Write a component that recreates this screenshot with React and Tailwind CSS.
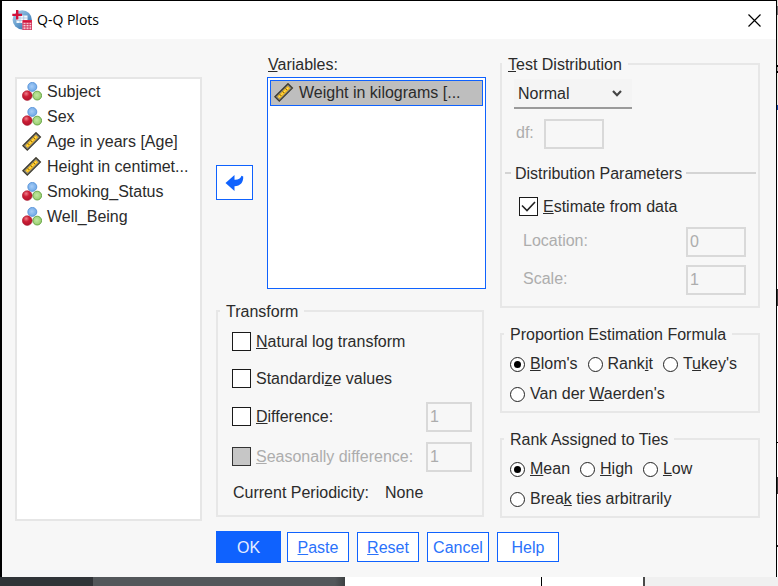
import { useState } from "react";

function NominalIcon() {
  return (
    <svg width="20" height="20" viewBox="0 0 20 20" className="shrink-0" aria-hidden="true">
      <defs>
        <radialGradient id="ballBlue" cx="0.45" cy="0.45" r="0.6">
          <stop offset="0" stopColor="#a6ccf6" />
          <stop offset="1" stopColor="#6aa5e6" />
        </radialGradient>
        <radialGradient id="ballRed" cx="0.4" cy="0.3" r="0.7">
          <stop offset="0" stopColor="#ee7f8b" />
          <stop offset="0.45" stopColor="#cc1f36" />
          <stop offset="1" stopColor="#b0142c" />
        </radialGradient>
        <radialGradient id="ballGreen" cx="0.45" cy="0.45" r="0.6">
          <stop offset="0" stopColor="#c2e8a2" />
          <stop offset="1" stopColor="#92ca68" />
        </radialGradient>
      </defs>
      <circle cx="10.3" cy="4.9" r="4.5" fill="url(#ballBlue)" stroke="#4f8dd6" strokeWidth="0.8" />
      <circle cx="15.2" cy="13.6" r="4.4" fill="url(#ballGreen)" stroke="#62a040" strokeWidth="0.9" />
      <circle cx="5.2" cy="13.6" r="4.9" fill="url(#ballRed)" stroke="#a3122a" strokeWidth="0.5" />
    </svg>
  );
}

function ScaleIcon() {
  return (
    <svg width="20" height="20" viewBox="0 0 20 20" className="shrink-0" aria-hidden="true">
      <path d="M0.9 13.8 14 0.7 18.4 5.1 5.3 18.2Z" fill="#8a877b" stroke="#3f3c30" strokeWidth="1.3" />
      <path d="M3.4 13.4 13.8 3 16.1 5.3 5.7 15.7Z" fill="#fcc21a" />
      <path d="M5.6 11.2 7.3 12.9M8.5 8.3 10.3 10.1M11.4 5.4 13.2 7.2" stroke="#6d5510" strokeWidth="0.9" />
      <path d="M4.4 14.6 14.9 4.1" stroke="#fff0a8" strokeWidth="0.6" strokeDasharray="2 2" />
    </svg>
  );
}

function AppIcon() {
  return (
    <svg width="20" height="20" viewBox="0 0 20 20" className="shrink-0" aria-hidden="true">
      <defs>
        <linearGradient id="globe" x1="0" y1="0" x2="0.8" y2="1">
          <stop offset="0" stopColor="#b4d2ea" />
          <stop offset="0.5" stopColor="#6fa5d2" />
          <stop offset="1" stopColor="#2d6cab" />
        </linearGradient>
      </defs>
      <circle cx="10.2" cy="9.8" r="9.6" fill="url(#globe)" />
      <rect x="4.5" y="5.5" width="11" height="7.5" fill="#f4f8fc" />
      <path d="M4.5 8H15.5M4.5 10.5H15.5M8 5.5V13M11.7 5.5V13" stroke="#9cbcdc" strokeWidth="0.7" />
      <path d="M5.2 0V9.6M0.3 4.9H10" stroke="#d3123a" strokeWidth="2.4" />
      <rect x="10.5" y="10" width="9.5" height="9.8" fill="#f6d3da" />
      <path d="M10.5 11.4H20" stroke="#d3123a" strokeWidth="2.6" />
      <path d="M10.5 14.4H20M10.5 16.9H20M10.5 19.4H20M11 12V19.8M14 12V19.8M17 12V19.8M19.6 11V19.8" stroke="#d3325a" strokeWidth="0.9" />
    </svg>
  );
}

function Group({ title, className, children }) {
  return (
    <fieldset className={`border-2 border-[#e7e7e7] ${className}`}>
      <legend className="px-1.5 pt-0.5 leading-[18px]">{title}</legend>
      {children}
    </fieldset>
  );
}

function Check({ children, disabled, defaultChecked }) {
  return (
    <label className={`flex items-center gap-[5px] ${disabled ? "text-[#adadad]" : ""}`}>
      <span className="grid size-[19px] shrink-0">
        <input
          type="checkbox"
          disabled={disabled}
          defaultChecked={defaultChecked}
          className="peer col-start-1 row-start-1 size-[19px] appearance-none border border-[#1a1a1a] bg-white disabled:border-[#333] disabled:bg-[#c6c6c6]"
        />
        <svg viewBox="0 0 19 19" className="pointer-events-none invisible col-start-1 row-start-1 peer-checked:visible" aria-hidden="true">
          <path d="M3 8.5 8 13.5 16 5" fill="none" stroke="#222" strokeWidth="1.6" />
        </svg>
      </span>
      <span>{children}</span>
    </label>
  );
}

function Radio({ name, defaultChecked, children }) {
  return (
    <label className="flex items-center gap-[5px]">
      <input
        type="radio"
        name={name}
        defaultChecked={defaultChecked}
        className="grid size-[15px] shrink-0 appearance-none place-items-center rounded-full border border-[#222] bg-white before:size-[7px] before:rounded-full checked:before:bg-black"
      />
      <span>{children}</span>
    </label>
  );
}

function NumberBox({ className, ...props }) {
  return (
    <input
      type="text"
      disabled
      className={`h-[30px] border-2 border-[#d9d9d9] bg-[#f7f7f7] px-0.5 text-[#adadad] ${className}`}
      {...props}
    />
  );
}

function ActionButton({ children }) {
  return (
    <button type="button" className="h-[30px] w-[62px] border border-[#0f62fe] bg-white pt-0.5 text-center text-[#2a72fb]">
      {children}
    </button>
  );
}

const variables = [
  { name: "Subject", kind: "nominal" },
  { name: "Sex", kind: "nominal" },
  { name: "Age in years [Age]", kind: "scale" },
  { name: "Height in centimet...", kind: "scale" },
  { name: "Smoking_Status", kind: "nominal" },
  { name: "Well_Being", kind: "nominal" },
];

export default function App() {
  const [distribution, setDistribution] = useState("Normal");
  return (
    <div className="flex min-h-screen flex-col bg-white font-['Liberation_Sans',Arial,sans-serif] text-base leading-[18px] text-[#2b2b2b]">
      <div className="flex flex-1">
        <main className="flex flex-1 flex-col border-t border-r border-l-2 border-black bg-[#f7f7f7]">
          <header className="flex h-[38px] items-center gap-[5px] bg-white pr-[15px] pl-2.5">
            <AppIcon />
            <h1 className="flex-1 font-['Open_Sans','Noto_Sans',sans-serif] text-sm text-black">Q-Q Plots</h1>
            <button type="button" aria-label="Close">
              <svg width="13" height="13" viewBox="0 0 13 13" aria-hidden="true">
                <path d="M0.5 0.5 12.5 12.5M12.5 0.5 0.5 12.5" stroke="#000" strokeWidth="1.2" />
              </svg>
            </button>
          </header>

          <div className="grid grid-cols-[187fr_270fr_260fr] gap-x-3.5 pt-[15px] pr-4 pb-3 pl-[13px]">
            <ul className="mt-[23px] border-2 border-[#e6e6e6] bg-white px-[5px]">
              {variables.map((v) => (
                <li key={v.name} className="flex h-[25px] items-center gap-[5px] whitespace-nowrap">
                  {v.kind === "nominal" ? <NominalIcon /> : <ScaleIcon />}
                  {v.name}
                </li>
              ))}
            </ul>

            <div className="pb-1">
              <div className="flex gap-3.5">
                <button type="button" aria-label="Move" className="mt-[111px] grid h-[35px] w-[37px] shrink-0 place-items-center border border-[#0f62fe] bg-white">
                  <svg width="19" height="18" viewBox="0 0 19 18" aria-hidden="true">
                    <path d="M0.5 9 9.5 1V5.8C13 6 15.6 5 16.5 1.8L18.2 2.4C18.6 8 15.5 12 9.5 12.2V17Z" fill="#0f62fe" />
                  </svg>
                </button>
                <div className="flex-1">
                  <div className="mb-[3px] pt-0.5 pl-px"><u>V</u>ariables:</div>
                  <ul className="h-[212px] border border-[#0f62fe] bg-white p-0.5">
                    <li className="flex h-[26px] items-center gap-[5px] border border-[#0f62fe] bg-[#bebebe] px-[3px] whitespace-nowrap">
                      <ScaleIcon />
                      Weight in kilograms [...
                    </li>
                  </ul>
                </div>
              </div>

              <Group title="Transform" className="mt-3 mr-0.5 h-[216px] pl-0.5">
                <div className="flex flex-col pt-0.5 pr-2.5 pl-3">
                  <div className="flex h-[37px] items-center"><Check><u>N</u>atural log transform</Check></div>
                  <div className="flex h-[37px] items-center"><Check>Standardi<u>z</u>e values</Check></div>
                  <div className="flex h-[39px] items-center justify-between">
                    <Check><u>D</u>ifference:</Check>
                    <NumberBox aria-label="Difference order" defaultValue="1" className="w-[46px]" />
                  </div>
                  <div className="flex h-[41px] items-center justify-between">
                    <Check disabled><u>S</u>easonally difference:</Check>
                    <NumberBox aria-label="Seasonal difference order" defaultValue="1" className="w-[46px]" />
                  </div>
                  <div className="flex h-8 items-center gap-4 pl-px"><span>Current Periodicity:</span><span>None</span></div>
                </div>
              </Group>
            </div>

            <div className="flex flex-col gap-4">
              <Group title={<><u>T</u>est Distribution</>} className="h-[254px]">
                <div className="px-3 pt-[5px]">
                  <div className="grid w-[118px] border-b-2 border-[#9a9a9a] bg-[#f4f4f4]">
                    <select
                      aria-label="Test distribution"
                      value={distribution}
                      onChange={(e) => setDistribution(e.target.value)}
                      className="col-start-1 row-start-1 h-7 appearance-none px-1 pt-0.5"
                    >
                      <option>Normal</option>
                    </select>
                    <svg width="10" height="7" viewBox="0 0 10 7" className="pointer-events-none col-start-1 row-start-1 mr-2.5 self-center justify-self-end" aria-hidden="true">
                      <path d="M1 1 5 5.2 9 1" fill="none" stroke="#444" strokeWidth="2.2" />
                    </svg>
                  </div>
                  <label className="mt-2.5 flex items-center gap-2.5 pl-0.5 text-[#adadad]">
                    <span className="pb-0.5">df:</span>
                    <NumberBox className="w-[60px]" />
                  </label>
                </div>
                <div className="mt-3.5 mr-0.5 ml-[3px] flex items-center gap-1">
                  <span className="h-0.5 w-1.5 bg-[#d4d4d4]" />
                  <span className="pt-0.5">Distribution Parameters</span>
                  <span className="h-0.5 flex-1 bg-[#d4d4d4]" />
                </div>
                <div className="pt-3.5 pr-3 pl-[17px]">
                  <Check defaultChecked><u>E</u>stimate from data</Check>
                  <label className="mt-[11px] flex items-center justify-between pl-1 text-[#adadad]">
                    <span className="pb-[3px]">Location:</span>
                    <NumberBox defaultValue="0" className="w-[60px]" />
                  </label>
                  <label className="mt-2 flex items-center justify-between pl-1 text-[#adadad]">
                    <span className="pb-[3px]">Scale:</span>
                    <NumberBox defaultValue="1" className="w-[60px]" />
                  </label>
                </div>
              </Group>

              <Group title="Proportion Estimation Formula" className="h-[89px] pl-0.5">
                <div className="flex gap-2.5 pt-[11px] pl-1.5 whitespace-nowrap">
                  <Radio name="formula" defaultChecked><u>B</u>lom's</Radio>
                  <Radio name="formula">Rank<u>i</u>t</Radio>
                  <Radio name="formula">T<u>u</u>key's</Radio>
                </div>
                <div className="mt-3 pl-1.5"><Radio name="formula">Van der <u>W</u>aerden's</Radio></div>
              </Group>

              <Group title="Rank Assigned to Ties" className="h-[89px] pl-0.5">
                <div className="flex gap-2.5 pt-[11px] pl-1.5 whitespace-nowrap">
                  <Radio name="ties" defaultChecked><u>M</u>ean</Radio>
                  <Radio name="ties"><u>H</u>igh</Radio>
                  <Radio name="ties"><u>L</u>ow</Radio>
                </div>
                <div className="mt-3 pl-1.5"><Radio name="ties">Brea<u>k</u> ties arbitrarily</Radio></div>
              </Group>
            </div>

            <div className="col-span-2 col-start-2 mt-2.5 flex items-center gap-2">
              <button type="button" className="-mr-0.5 h-8 w-[65px] bg-[#0f62fe] pt-0.5 text-[#e6edff]">OK</button>
              <ActionButton><u>P</u>aste</ActionButton>
              <ActionButton><u>R</u>eset</ActionButton>
              <ActionButton>Cancel</ActionButton>
              <ActionButton>Help</ActionButton>
            </div>
          </div>
        </main>
        <div className="flex w-px flex-col bg-white">
          <div className="h-1.5 bg-[#dcdcd4]" />
          <div className="h-[9px] bg-[#6e6e6e]" />
          <div className="h-[50px] bg-[#ecece2]" />
          <div className="h-0.5 bg-black" />
          <div className="h-1 bg-[#b8b8b0]" />
          <div className="h-0.5 bg-black" />
          <div className="h-8 bg-[#ecece2]" />
          <div className="h-[5px] bg-[#1046b4]" />
          <div className="mt-[179px] h-[17px] bg-[#3a3a3a]" />
          <div className="mt-[136px] h-px bg-black" />
          <div className="mt-[34px] h-[17px] bg-[#3a3a3a]" />
          <div className="mt-[51px] h-0.5 bg-[#222]" />
        </div>
      </div>
      <footer className="flex h-[9px]">
        <div className="w-[93px] bg-[#303437]" />
        <div className="w-[252px] bg-linear-to-r from-[#53575a] from-96% to-[#3d4042]" />
        <div className="w-[196px] bg-white" />
        <div className="w-px bg-black" />
        <div className="w-[101px] bg-white" />
        <div className="w-0.5 bg-[#4a4a4a]" />
        <div className="flex-1 bg-[#f0f0f0]" />
      </footer>
    </div>
  );
}
